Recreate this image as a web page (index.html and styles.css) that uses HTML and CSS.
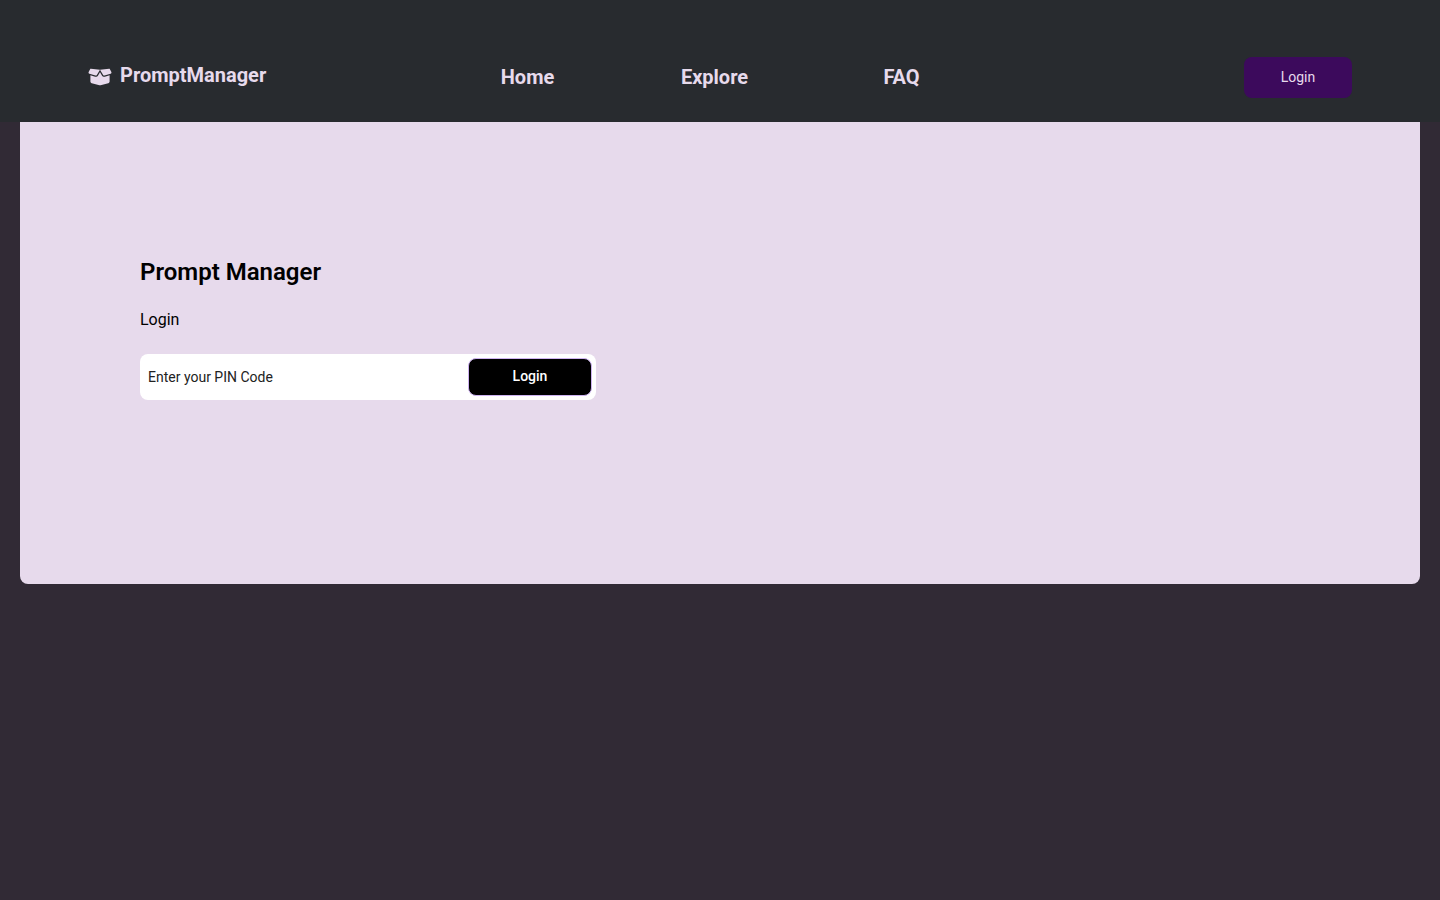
FILE: index.html
```html
<!DOCTYPE html>
<html lang="en">
<head>
<meta charset="utf-8">
<meta name="viewport" content="width=device-width, initial-scale=1">
<title>PromptManager</title>
<link rel="stylesheet" href="styles.css">
</head>
<body>
<header class="header">
  <a class="brand" href="#">
    <svg class="brand-icon" viewBox="0 0 640 512" aria-hidden="true"><path fill="currentColor" d="M58.9 42.1c3-6.1 9.6-9.6 16.3-8.7L320 64 564.8 33.4c6.7-.8 13.3 2.7 16.3 8.7l41.7 83.4c9 17.9-.6 39.6-19.8 45.1L439.6 217.3c-13.9 4-28.8-1.9-36.2-14.3L320 64 236.6 203c-7.4 12.4-22.3 18.3-36.2 14.3L37.1 170.6c-19.3-5.5-28.8-27.2-19.8-45.1L58.9 42.1zM321.1 128l54.9 91.4c14.9 24.8 44.6 36.6 72.5 28.6L576 211.6v167c0 22-15 41.2-36.4 46.6l-204.1 51c-10.2 2.6-20.9 2.6-31 0l-204.1-51C79 419.8 64 400.6 64 378.5v-167L191.6 248c27.8 8 57.6-3.8 72.5-28.6L318.9 128h2.2z"/></svg>
    <span class="brand-name">PromptManager</span>
  </a>
  <nav class="nav">
    <a class="nav-link" href="#">Home</a>
    <a class="nav-link" href="#">Explore</a>
    <a class="nav-link" href="#">FAQ</a>
  </nav>
  <div class="actions"><button class="header-login" type="button">Login</button></div>
</header>
<main class="panel">
  <h1 class="title">Prompt Manager</h1>
  <form class="login">
    <label class="login-label" for="pin">Login</label>
    <div class="field">
      <input class="pin" id="pin" type="text" placeholder="Enter your PIN Code">
      <button class="submit" type="button">Login</button>
    </div>
  </form>
</main>
</body>
</html>
```

FILE: styles.css
```css
* { box-sizing: border-box; }

body {
  margin: 0;
  min-height: 100vh;
  background: #312a35;
  color: #000;
  font-family: Roboto, sans-serif;
}

.header {
  display: grid;
  grid-template-columns: 346fr 561fr 357fr;
  align-items: start;
  padding: 57px 88px 24px;
  background: #282b2f;
  color: #e7daec;
}

.brand {
  display: flex;
  align-items: center;
  gap: 8px;
  color: inherit;
  font-size: 20px;
  font-weight: 700;
  line-height: 36px;
  text-decoration: none;
}

.brand-icon {
  width: 24px;
  height: 20px;
}

.brand-name {
  padding-bottom: 4px;
}

.nav {
  display: grid;
  grid-template-columns: repeat(3, 1fr);
  justify-items: center;
}

.nav-link {
  color: inherit;
  font-size: 20px;
  font-weight: 700;
  line-height: 40px;
  text-decoration: none;
}

.actions {
  display: flex;
  justify-content: flex-end;
}

.header-login {
  width: 108px;
  height: 41px;
  padding: 0 0 1px;
  border: 0;
  border-radius: 8px;
  background: #3c0a5c;
  color: #e7daec;
  font: 400 14px/20px Roboto, sans-serif;
}

.panel {
  margin: 0 20px;
  padding: 136px 120px 184px;
  border-radius: 0 0 8px 8px;
  background: #e7daec;
}

.title {
  margin: 0 0 24px;
  font-size: 24px;
  font-weight: 600;
  line-height: 28px;
}

.login {
  max-width: 456px;
}

.login-label {
  display: block;
  margin-bottom: 24px;
  font-size: 16px;
  line-height: 20px;
}

.field {
  display: flex;
  align-items: center;
  padding: 4px;
  border-radius: 8px;
  background: #fff;
}

.pin {
  flex: 1;
  min-width: 0;
  padding: 0 4px;
  border: 0;
  outline: 0;
  background: transparent;
  font: 400 14px/20px Roboto, sans-serif;
}

.pin::placeholder {
  color: #222;
  opacity: 1;
}

.submit {
  width: 124px;
  height: 38px;
  padding: 0 0 2px;
  border: 1px solid #cdb2f0;
  border-radius: 8px;
  background: #000;
  color: #fff;
  font: 500 14px/20px Roboto, sans-serif;
}
```
